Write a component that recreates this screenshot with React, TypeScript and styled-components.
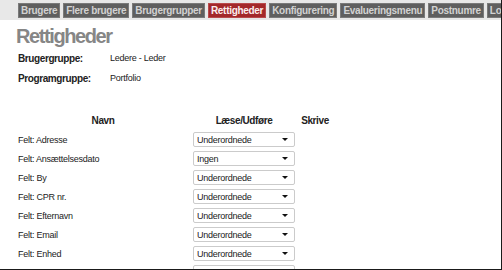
import React from "react";
import styled, { createGlobalStyle } from "styled-components";

const Global = createGlobalStyle`
  html, body { margin: 0; padding: 0; background: #fff; }
  body { font-family: "Liberation Sans", Arial, sans-serif; overflow: hidden; }
`;

const Frame = styled.div`
  width: 502px;
  height: 270px;
  box-sizing: border-box;
  border-right: 1px solid #1a1a1a;
  border-bottom: 1px solid #1a1a1a;
  overflow: hidden;
  background: #fff;
`;

const TabBar = styled.div`
  display: flex;
  gap: 3px;
  height: 20px;
  padding: 3px 0 0 18px;
  box-sizing: border-box;
  background: #e8e8e8;
  white-space: nowrap;
  overflow: hidden;
`;

const Tab = styled.div<{ $active?: boolean }>`
  flex: none;
  height: 15px;
  padding: 0 3px;
  display: flex;
  align-items: center;
  font-size: 10px;
  font-weight: bold;
  letter-spacing: -0.3px;
  color: ${(p) => (p.$active ? "#fbeeee" : "#d2d2d2")};
  background: ${(p) => (p.$active ? "#a3282a" : "#5f5f5f")};
  box-shadow: 0 0 0 1px ${(p) => (p.$active ? "#b84a4c" : "#7a7a7a")} inset;
  box-sizing: border-box;
`;

const Content = styled.div`
  padding: 4px 0 0 18px;
`;

const Title = styled.h1`
  margin: 0 0 0 -2px;
  font-size: 20px;
  font-weight: bold;
  letter-spacing: -1.4px;
  color: #868686;
  line-height: 24px;
`;

const InfoRow = styled.div`
  display: grid;
  grid-template-columns: 92px auto;
  height: 20px;
  align-items: center;
  font-size: 9px;
  letter-spacing: -0.25px;
  color: #222;
`;

const InfoLabel = styled.span`
  font-size: 10px;
  font-weight: bold;
  letter-spacing: -0.4px;
`;

const Table = styled.div`
  display: grid;
  grid-template-columns: 175px 102px 40px;
  grid-auto-rows: 19px;
  margin-top: 23px;
  font-size: 9px;
  letter-spacing: -0.25px;
  color: #222;
  align-items: center;
`;

const Head = styled.div<{ $shift?: number }>`
  font-size: 10px;
  font-weight: bold;
  letter-spacing: -0.4px;
  text-align: center;
  padding-right: ${(p) => p.$shift || 0}px;
`;

const Name = styled.div`
  padding-top: 0;
`;

const Select = styled.div`
  height: 15px;
  box-sizing: border-box;
  border: 1px solid #cbcbcb;
  border-radius: 2px;
  background: #fff;
  display: flex;
  align-items: center;
  justify-content: space-between;
  padding: 0 6px 0 3px;
  color: #222;
`;

const Arrow = styled.svg`
  width: 6px;
  height: 3px;
  flex: none;
`;

const Empty = styled.div``;

const tabs = [
  "Brugere",
  "Flere brugere",
  "Brugergrupper",
  "Rettigheder",
  "Konfigurering",
  "Evalueringsmenu",
  "Postnumre",
  "Log",
];

const rows: [string, string][] = [
  ["Felt: Adresse", "Underordnede"],
  ["Felt: Ansættelsesdato", "Ingen"],
  ["Felt: By", "Underordnede"],
  ["Felt: CPR nr.", "Underordnede"],
  ["Felt: Efternavn", "Underordnede"],
  ["Felt: Email", "Underordnede"],
  ["Felt: Enhed", "Underordnede"],
  ["Felt: Fornavn", "Underordnede"],
];

export default function App() {
  return (
    <Frame>
      <Global />
      <TabBar>
        {tabs.map((t) => (
          <Tab key={t} $active={t === "Rettigheder"}>
            {t}
          </Tab>
        ))}
      </TabBar>
      <Content>
        <Title>Rettigheder</Title>
        <InfoRow>
          <InfoLabel>Brugergruppe:</InfoLabel>
          <span>Ledere - Leder</span>
        </InfoRow>
        <InfoRow>
          <InfoLabel>Programgruppe:</InfoLabel>
          <span>Portfolio</span>
        </InfoRow>
        <Table>
          <Head $shift={5}>Navn</Head>
          <Head>Læse/Udføre</Head>
          <Head>Skrive</Head>
          {rows.map(([n, v]) => (
            <React.Fragment key={n}>
              <Name>{n}</Name>
              <Select>
                <span>{v}</span>
                <Arrow viewBox="0 0 6 3">
                  <path d="M0 0 L6 0 L3 3 Z" fill="#111" />
                </Arrow>
              </Select>
              <Empty />
            </React.Fragment>
          ))}
        </Table>
      </Content>
    </Frame>
  );
}
